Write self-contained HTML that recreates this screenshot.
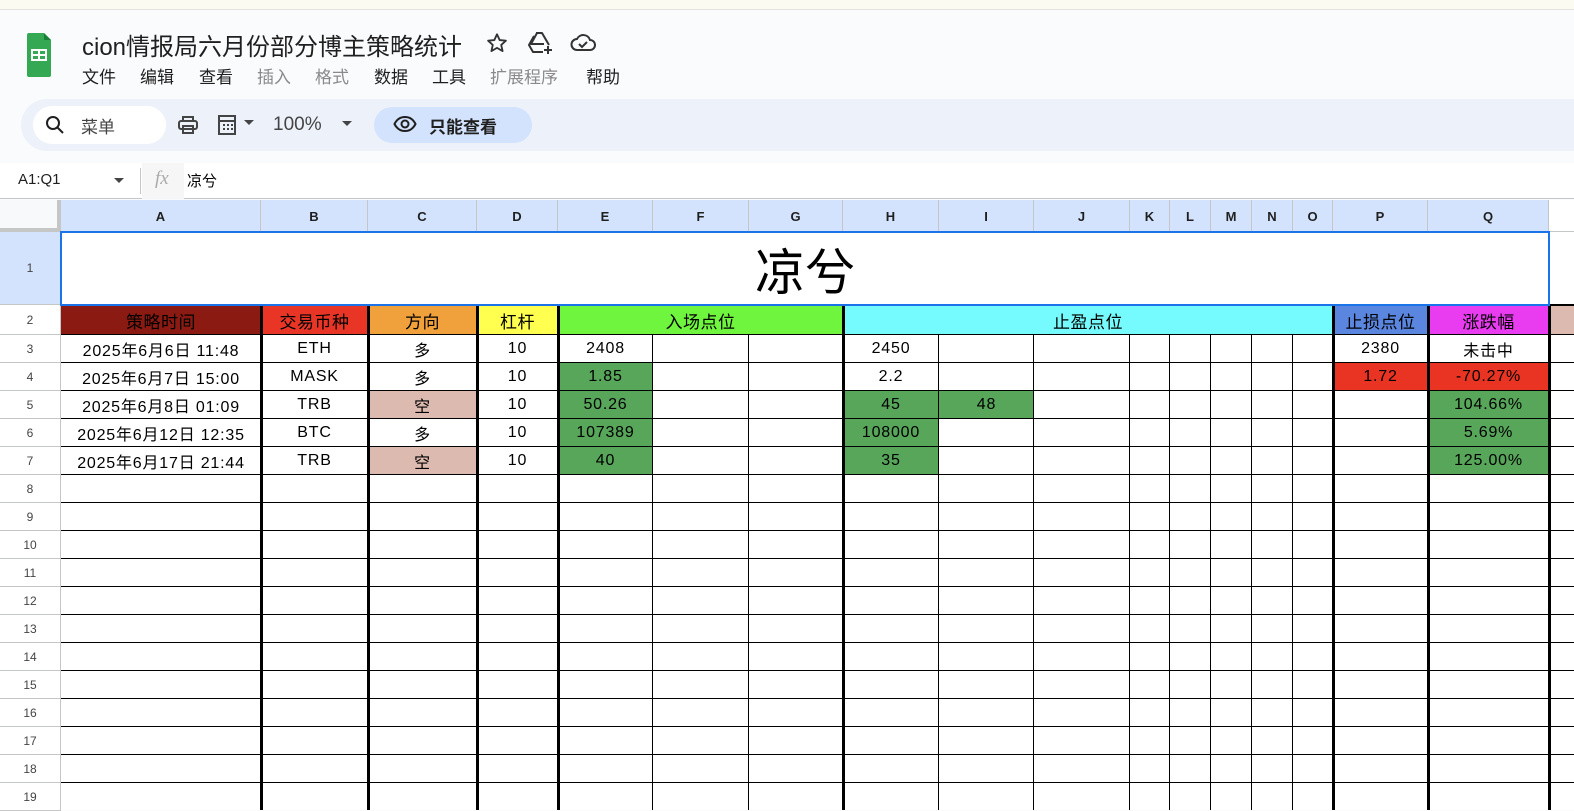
<!DOCTYPE html>
<html><head><meta charset="utf-8"><style>
*{margin:0;padding:0;box-sizing:border-box}
body{width:1574px;height:810px;overflow:hidden;background:#f9fbfd;position:relative;font-family:"Liberation Sans","Noto Sans CJK SC",sans-serif;color:#000}
div{position:absolute}
.c{display:flex;align-items:center;justify-content:center;font-size:16px;letter-spacing:0.8px;white-space:nowrap}
.hd{font-size:17px;letter-spacing:0.5px}
.ch{display:flex;align-items:center;justify-content:center;font-size:13px;font-weight:bold;color:#1f1f1f;background:#d3e3fd;border-right:1px solid #c4c7c5;top:200px;height:32px}
.rh{left:0;width:61px;display:flex;align-items:center;justify-content:center;font-size:12px;color:#444;background:#fff;border-bottom:1px solid #c4c7c5;border-right:1px solid #c4c7c5}
.v{background:#000;width:1px}
.V{background:#000;width:3px}
.h{background:#000;height:1px;left:61px;width:1513px}
.m{font-size:17px;color:#1f1f1f;top:63px}
.m.g{color:#8a8a8a}
</style></head><body>
<div style="left:0;top:0;width:1574px;height:10px;background:#fbfbf1;border-bottom:1px solid #e3e3dc"></div>
<svg style="position:absolute;left:27px;top:32px" width="24" height="46" viewBox="0 0 24 46"><path d="M2 1h15l7 7v35a2 2 0 0 1-2 2H2a2 2 0 0 1-2-2V3a2 2 0 0 1 2-2z" fill="#34a853"/><path d="M17 1v7h7z" fill="#188038"/><rect x="5" y="18" width="14" height="10" fill="none" stroke="#fff" stroke-width="2"/><line x1="5" y1="23" x2="19" y2="23" stroke="#fff" stroke-width="2"/><line x1="12" y1="18" x2="12" y2="28" stroke="#fff" stroke-width="2"/></svg>
<div style="left:82px;top:27px;font-size:24px;color:#1f1f1f">cion情报局六月份部分博主策略统计</div>
<svg style="position:absolute;left:486px;top:32px" width="22" height="22" viewBox="0 0 24 24" fill="none" stroke="#333" stroke-width="2" stroke-linejoin="round"><path d="M12 2.5l2.9 6.3 6.8.7-5.1 4.6 1.5 6.7L12 17.3l-6.1 3.5 1.5-6.7-5.1-4.6 6.8-.7z"/></svg>
<svg style="position:absolute;left:528px;top:31px" width="26" height="24" viewBox="0 0 26 24" fill="none" stroke="#333" stroke-width="2" stroke-linejoin="round"><path d="M8 2h6l7 12M6 5L1 14l4 7h10M9 2L3 13h13"/><path d="M20 15v8M16 19h8"/></svg>
<svg style="position:absolute;left:570px;top:33px" width="26" height="20" viewBox="0 0 26 20" fill="none" stroke="#333" stroke-width="2"><path d="M7 17h13a5 5 0 0 0 0-10 7 7 0 0 0-13-1 5.5 5.5 0 0 0 0 11z"/><path d="M9 11l3 3 5-5"/></svg>
<div class="m" style="left:82px">文件</div><div class="m" style="left:140px">编辑</div><div class="m" style="left:199px">查看</div><div class="m g" style="left:257px">插入</div><div class="m g" style="left:315px">格式</div><div class="m" style="left:374px">数据</div><div class="m" style="left:432px">工具</div><div class="m g" style="left:490px">扩展程序</div><div class="m" style="left:586px">帮助</div>
<div style="left:21px;top:99px;width:1553px;height:52px;background:#edf2fa;border-radius:26px 0 0 26px"></div>
<div style="left:33px;top:106px;width:133px;height:38px;background:#fff;border-radius:19px"></div>
<svg style="position:absolute;left:45px;top:115px" width="20" height="20" viewBox="0 0 20 20" fill="none" stroke="#1f1f1f" stroke-width="2"><circle cx="8" cy="8" r="6"/><path d="M12.5 12.5L18 18"/></svg>
<div style="left:81px;top:113px;font-size:17px;color:#444">菜单</div>
<svg style="position:absolute;left:177px;top:114px" width="22" height="22" viewBox="0 0 22 22" fill="none" stroke="#444" stroke-width="2"><path d="M6 7V3h10v4"/><rect x="2" y="7" width="18" height="8" rx="2"/><rect x="6" y="12" width="10" height="7"/></svg>
<svg style="position:absolute;left:217px;top:114px" width="22" height="22" viewBox="0 0 22 22" fill="none" stroke="#444" stroke-width="2"><rect x="2" y="2" width="16" height="18"/><path d="M2 7h16M6 11h2M10 11h2M14 11h2M6 15h2M10 15h2M14 15h2"/></svg>
<div style="left:244px;top:120px;width:0;height:0;border-left:5px solid transparent;border-right:5px solid transparent;border-top:5px solid #444"></div>
<div style="left:273px;top:114px;font-size:19px;color:#444">100%</div>
<div style="left:342px;top:121px;width:0;height:0;border-left:5px solid transparent;border-right:5px solid transparent;border-top:5px solid #444"></div>
<div style="left:374px;top:107px;width:158px;height:36px;background:#d3e3fd;border-radius:18px"></div>
<svg style="position:absolute;left:393px;top:115px" width="24" height="18" viewBox="0 0 24 18" fill="none" stroke="#1f1f1f" stroke-width="2"><path d="M1.5 9C4 4 8 2 12 2s8 2 10.5 7C20 14 16 16 12 16S4 14 1.5 9z"/><circle cx="12" cy="9" r="3.5"/></svg>
<div style="left:429px;top:113px;font-size:17px;color:#1f1f1f;font-weight:bold">只能查看</div>
<div style="left:0;top:163px;width:1574px;height:36px;background:#fff;border-bottom:1px solid #c4c7c5"></div>
<div style="left:18px;top:171px;font-size:15px;color:#1f1f1f">A1:Q1</div>
<div style="left:114px;top:178px;width:0;height:0;border-left:5px solid transparent;border-right:5px solid transparent;border-top:5px solid #444"></div>
<div style="left:140px;top:168px;width:1px;height:26px;background:#c4c7c5"></div>
<div style="left:142px;top:163px;width:42px;height:36px;background:#f6f6f6"></div>
<div style="left:155px;top:168px;font-size:19px;color:#aaa;font-style:italic;font-family:'Liberation Serif',serif">fx</div>
<div style="left:187px;top:170px;font-size:15px">凉兮</div>
<div style="left:0;top:200px;width:61px;height:32px;background:#f8f9fa;border-right:4px solid #c4c7c5;border-bottom:4px solid #c4c7c5"></div>
<div class="ch" style="left:61px;width:200px">A</div><div class="ch" style="left:261px;width:107px">B</div><div class="ch" style="left:368px;width:109px">C</div><div class="ch" style="left:477px;width:81px">D</div><div class="ch" style="left:558px;width:95px">E</div><div class="ch" style="left:653px;width:96px">F</div><div class="ch" style="left:749px;width:94px">G</div><div class="ch" style="left:843px;width:96px">H</div><div class="ch" style="left:939px;width:95px">I</div><div class="ch" style="left:1034px;width:96px">J</div><div class="ch" style="left:1130px;width:40px">K</div><div class="ch" style="left:1170px;width:41px">L</div><div class="ch" style="left:1211px;width:41px">M</div><div class="ch" style="left:1252px;width:41px">N</div><div class="ch" style="left:1293px;width:40px">O</div><div class="ch" style="left:1333px;width:95px">P</div><div class="ch" style="left:1428px;width:121px">Q</div>
<div style="left:1549px;top:200px;width:25px;height:32px;background:#fff;border-bottom:1px solid #c4c7c5"></div>
<div style="left:61px;top:231px;width:1513px;height:1px;background:#c4c7c5"></div>
<div style="left:61px;top:232px;width:1513px;height:578px;background:#fff"></div>
<div class="rh" style="top:232px;height:73px;background:#d3e3fd">1</div>
<div class="rh" style="top:305px;height:30px">2</div>
<div class="rh" style="top:335px;height:28px">3</div><div class="rh" style="top:363px;height:28px">4</div><div class="rh" style="top:391px;height:28px">5</div><div class="rh" style="top:419px;height:28px">6</div><div class="rh" style="top:447px;height:28px">7</div><div class="rh" style="top:475px;height:28px">8</div><div class="rh" style="top:503px;height:28px">9</div><div class="rh" style="top:531px;height:28px">10</div><div class="rh" style="top:559px;height:28px">11</div><div class="rh" style="top:587px;height:28px">12</div><div class="rh" style="top:615px;height:28px">13</div><div class="rh" style="top:643px;height:28px">14</div><div class="rh" style="top:671px;height:28px">15</div><div class="rh" style="top:699px;height:28px">16</div><div class="rh" style="top:727px;height:28px">17</div><div class="rh" style="top:755px;height:28px">18</div><div class="rh" style="top:783px;height:28px">19</div>
<div class="c" style="left:61px;top:232px;width:1488px;height:73px;font-size:50px;letter-spacing:0">凉兮</div>
<div class="c hd" style="left:61px;top:305px;width:200px;height:30px;background:#8b1a12">策略时间</div>
<div class="c hd" style="left:261px;top:305px;width:107px;height:30px;background:#e93526">交易币种</div>
<div class="c hd" style="left:368px;top:305px;width:109px;height:30px;background:#f1a13b">方向</div>
<div class="c hd" style="left:477px;top:305px;width:81px;height:30px;background:#ffff4f">杠杆</div>
<div class="c hd" style="left:558px;top:305px;width:285px;height:30px;background:#70f53f">入场点位</div>
<div class="c hd" style="left:843px;top:305px;width:490px;height:30px;background:#75fbfd">止盈点位</div>
<div class="c hd" style="left:1333px;top:305px;width:95px;height:30px;background:#5a86df">止损点位</div>
<div class="c hd" style="left:1428px;top:305px;width:121px;height:30px;background:#e93cf0">涨跌幅</div>
<div style="left:1549px;top:305px;width:25px;height:30px;background:#ddbab0"></div>
<div style="left:368px;top:391px;width:109px;height:28px;background:#ddbab0"></div>
<div style="left:368px;top:447px;width:109px;height:28px;background:#ddbab0"></div>
<div style="left:558px;top:363px;width:95px;height:112px;background:#57a65a"></div>
<div style="left:843px;top:391px;width:96px;height:84px;background:#57a65a"></div>
<div style="left:939px;top:391px;width:95px;height:28px;background:#57a65a"></div>
<div style="left:1333px;top:363px;width:95px;height:28px;background:#ea3423"></div>
<div style="left:1428px;top:363px;width:121px;height:28px;background:#ea3423"></div>
<div style="left:1428px;top:391px;width:121px;height:84px;background:#57a65a"></div>
<div class="h" style="top:304px;height:2px"></div>
<div class="h" style="top:334px"></div><div class="h" style="top:362px"></div><div class="h" style="top:390px"></div><div class="h" style="top:418px"></div><div class="h" style="top:446px"></div><div class="h" style="top:474px"></div><div class="h" style="top:502px"></div><div class="h" style="top:530px"></div><div class="h" style="top:558px"></div><div class="h" style="top:586px"></div><div class="h" style="top:614px"></div><div class="h" style="top:642px"></div><div class="h" style="top:670px"></div><div class="h" style="top:698px"></div><div class="h" style="top:726px"></div><div class="h" style="top:754px"></div><div class="h" style="top:782px"></div>
<div class="V" style="left:260px;top:305px;height:505px"></div>
<div class="V" style="left:367px;top:305px;height:505px"></div>
<div class="V" style="left:476px;top:305px;height:505px"></div>
<div class="V" style="left:557px;top:305px;height:505px"></div>
<div class="V" style="left:842px;top:305px;height:505px"></div>
<div class="V" style="left:1332px;top:305px;height:505px"></div>
<div class="V" style="left:1427px;top:305px;height:505px"></div>
<div class="V" style="left:1548px;top:305px;height:505px"></div>
<div class="v" style="left:652px;top:335px;height:475px"></div><div class="v" style="left:748px;top:335px;height:475px"></div><div class="v" style="left:938px;top:335px;height:475px"></div><div class="v" style="left:1033px;top:335px;height:475px"></div><div class="v" style="left:1129px;top:335px;height:475px"></div><div class="v" style="left:1169px;top:335px;height:475px"></div><div class="v" style="left:1210px;top:335px;height:475px"></div><div class="v" style="left:1251px;top:335px;height:475px"></div><div class="v" style="left:1292px;top:335px;height:475px"></div>
<div style="left:60px;top:231px;width:1490px;height:75px;border:2px solid #1a73e8"></div>
<div class="c" style="left:61px;top:335px;width:200px;height:28px">2025年6月6日 11:48</div>
<div class="c" style="left:61px;top:363px;width:200px;height:28px">2025年6月7日 15:00</div>
<div class="c" style="left:61px;top:391px;width:200px;height:28px">2025年6月8日 01:09</div>
<div class="c" style="left:61px;top:419px;width:200px;height:28px">2025年6月12日 12:35</div>
<div class="c" style="left:61px;top:447px;width:200px;height:28px">2025年6月17日 21:44</div>
<div class="c" style="left:261px;top:335px;width:107px;height:28px">ETH</div>
<div class="c" style="left:261px;top:363px;width:107px;height:28px">MASK</div>
<div class="c" style="left:261px;top:391px;width:107px;height:28px">TRB</div>
<div class="c" style="left:261px;top:419px;width:107px;height:28px">BTC</div>
<div class="c" style="left:261px;top:447px;width:107px;height:28px">TRB</div>
<div class="c" style="left:368px;top:335px;width:109px;height:28px">多</div>
<div class="c" style="left:368px;top:363px;width:109px;height:28px">多</div>
<div class="c" style="left:368px;top:391px;width:109px;height:28px">空</div>
<div class="c" style="left:368px;top:419px;width:109px;height:28px">多</div>
<div class="c" style="left:368px;top:447px;width:109px;height:28px">空</div>
<div class="c" style="left:477px;top:335px;width:81px;height:28px">10</div>
<div class="c" style="left:477px;top:363px;width:81px;height:28px">10</div>
<div class="c" style="left:477px;top:391px;width:81px;height:28px">10</div>
<div class="c" style="left:477px;top:419px;width:81px;height:28px">10</div>
<div class="c" style="left:477px;top:447px;width:81px;height:28px">10</div>
<div class="c" style="left:558px;top:335px;width:95px;height:28px">2408</div>
<div class="c" style="left:558px;top:363px;width:95px;height:28px">1.85</div>
<div class="c" style="left:558px;top:391px;width:95px;height:28px">50.26</div>
<div class="c" style="left:558px;top:419px;width:95px;height:28px">107389</div>
<div class="c" style="left:558px;top:447px;width:95px;height:28px">40</div>
<div class="c" style="left:843px;top:335px;width:96px;height:28px">2450</div>
<div class="c" style="left:843px;top:363px;width:96px;height:28px">2.2</div>
<div class="c" style="left:843px;top:391px;width:96px;height:28px">45</div>
<div class="c" style="left:843px;top:419px;width:96px;height:28px">108000</div>
<div class="c" style="left:843px;top:447px;width:96px;height:28px">35</div>
<div class="c" style="left:939px;top:391px;width:95px;height:28px">48</div>
<div class="c" style="left:1333px;top:335px;width:95px;height:28px">2380</div>
<div class="c" style="left:1333px;top:363px;width:95px;height:28px">1.72</div>
<div class="c" style="left:1428px;top:335px;width:121px;height:28px">未击中</div>
<div class="c" style="left:1428px;top:363px;width:121px;height:28px">-70.27%</div>
<div class="c" style="left:1428px;top:391px;width:121px;height:28px">104.66%</div>
<div class="c" style="left:1428px;top:419px;width:121px;height:28px">5.69%</div>
<div class="c" style="left:1428px;top:447px;width:121px;height:28px">125.00%</div>
</body></html>
